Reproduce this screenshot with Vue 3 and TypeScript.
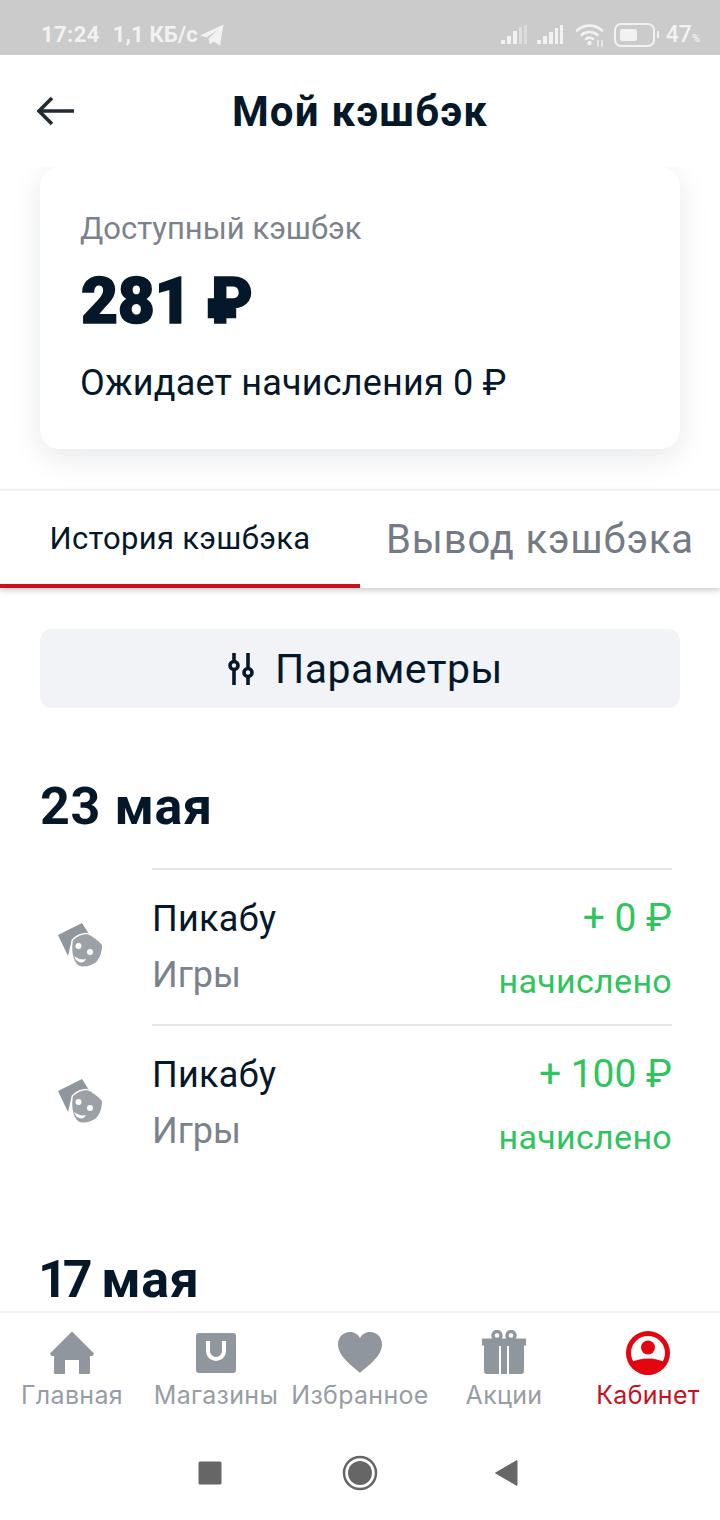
<script setup lang="ts">
interface Tx { name: string; cat: string; amount: string; status: string }
const txs: Tx[] = [
  { name: 'Пикабу', cat: 'Игры', amount: '+ 0 ₽', status: 'начислено' },
  { name: 'Пикабу', cat: 'Игры', amount: '+ 100 ₽', status: 'начислено' },
]
</script>

<template>
  <div class="screen">
    <div class="status">
      <div class="st-left">
        <span class="time">17:24</span>
        <span class="speed">1,1 КБ/с</span>
        <svg class="tg" width="26" height="24" viewBox="0 0 26 24"><path d="M1 12.5 24.5 1.5 21 22.5 14.5 18.5 11 21.5 9.5 15.5 19 6.5 7.5 14.5Z" fill="#f2f2f2"/></svg>
      </div>
      <div class="st-right">
        <svg class="sig1" width="27" height="20" viewBox="0 0 27 20">
          <rect x="0" y="15" width="4" height="4" fill="#f2f2f2"/><rect x="6" y="11" width="4" height="8" fill="#f2f2f2"/><rect x="12" y="6" width="4" height="13" fill="#f2f2f2"/><rect x="18" y="2" width="3" height="17" fill="#dfdfdf"/><rect x="23" y="0" width="3" height="19" fill="#dcdcdc"/>
        </svg>
        <svg class="sig2" width="27" height="20" viewBox="0 0 27 20">
          <rect x="0" y="15" width="4" height="4" fill="#f2f2f2"/><rect x="6" y="11" width="4" height="8" fill="#f2f2f2"/><rect x="12" y="7" width="4" height="12" fill="#f2f2f2"/><rect x="18" y="3" width="3" height="16" fill="#f2f2f2"/><rect x="23" y="0" width="3" height="19" fill="#f2f2f2"/>
        </svg>
        <svg class="wifi" width="30" height="24" viewBox="0 0 30 24" fill="none" stroke="#f2f2f2" stroke-width="2.6" stroke-linecap="round">
          <path d="M2 7.5C9 1 20 1 27 7.5"/><path d="M6.5 12C11 8 18 8 22.5 12"/><path d="M11 16C13 14.5 16 14.5 18 16"/>
          <circle cx="14.5" cy="20" r="2.2" fill="#f2f2f2" stroke="none"/>
          <path d="M23 17.5V23M27 17.5V23" stroke-width="1.4"/>
        </svg>
        <div class="battery"><div class="bat-fill"></div></div>
        <div class="bat-tip"></div>
        <span class="pct">47<small>%</small></span>
      </div>
    </div>

    <header class="top">
      <svg class="back" width="40" height="30" viewBox="0 0 40 30" fill="none" stroke="#222a30" stroke-width="3.6">
        <path d="M38 15H3"/><path d="M16 2 3 15 16 28"/>
      </svg>
      <h1>Мой кэшбэк</h1>
    </header>

    <main class="content">
      <section class="card">
        <div class="avail">Доступный кэшбэк</div>
        <div class="sum">281 ₽</div>
        <div class="wait">Ожидает начисления 0 ₽</div>
      </section>

      <nav class="tabs">
        <div class="tab tab-on">История кэшбэка</div>
        <div class="tab tab-off">Вывод кэшбэка</div>
      </nav>

      <div class="filter-wrap">
        <button class="filter" type="button">
          <svg width="28" height="32" viewBox="0 0 28 32" fill="none" stroke="#04182a" stroke-width="3.6">
            <path d="M7 0V8M7 17V32M21 0V15M21 24V32"/>
            <circle cx="7" cy="12.500" r="4"/><circle cx="21" cy="19.500" r="4"/>
          </svg>
          <span>Параметры</span>
        </button>
      </div>

      <h2 class="date d1">23 мая</h2>
      <div class="list">
        <div v-for="(t, i) in txs" :key="i" class="row">
          <div class="mask">
            <svg width="44" height="44" viewBox="0 0 44 44">
              <path d="M0 12 24 0 31 11 14 16 10 33Z" fill="#90969e"/>
              <path d="M15 17C19 13 25 11 29 11 34 13 40 17 44 22 44 30 41 37 37 40 32 43 25 45 20 42 15 38 13 27 15 17Z" fill="#9ca1a8" stroke="#fff" stroke-width="2.400" paint-order="stroke"/>
              <circle cx="20.500" cy="23" r="3" fill="#fff"/><circle cx="32" cy="29" r="3" fill="#fff"/>
              <path d="M16 33C20 36 24 37 28 36 26 41 19 41 16 33Z" fill="#fff"/>
            </svg>
          </div>
          <div class="body">
            <div class="cell-l">
              <div class="name">{{ t.name }}</div>
              <div class="cat">{{ t.cat }}</div>
            </div>
            <div class="cell-r">
              <div class="amount">{{ t.amount }}</div>
              <div class="state">{{ t.status }}</div>
            </div>
          </div>
        </div>
      </div>
      <h2 class="date d2"><span class="num">17</span> мая</h2>
    </main>

    <footer class="bottom">
      <div class="nav">
        <div class="item">
          <svg width="46" height="46" viewBox="0 0 46 46"><path d="M23 1.500 45 23.500 43.500 26H41V42.500Q41 44 39.500 44H30V30H16V44H6.500Q5 44 5 42.500V26H2.500L1 23.500Z" fill="#90969e"/></svg>
          <span>Главная</span>
        </div>
        <div class="item">
          <svg width="46" height="46" viewBox="0 0 46 46"><rect x="3" y="3" width="40" height="40" rx="3" fill="#90969e"/><path d="M15 11V21A8 8 0 0 0 31 21V11" fill="none" stroke="#fff" stroke-width="4"/></svg>
          <span>Магазины</span>
        </div>
        <div class="item">
          <svg width="46" height="46" viewBox="0 0 46 46"><path d="M23 43C17 37 1 27 1 14.500 1 6 7.500 2 13 2 17.500 2 21 4.500 23 8 25 4.500 28.500 2 33 2 38.500 2 45 6 45 14.500 45 27 29 37 23 43Z" fill="#90969e"/></svg>
          <span>Избранное</span>
        </div>
        <div class="item">
          <svg width="46" height="46" viewBox="0 0 46 46">
            <path d="M1 8.500H45V15.500H1ZM3 15.500H43V41Q43 44 40 44H6Q3 44 3 41Z" fill="#90969e"/>
            <circle cx="16" cy="5.500" r="4" fill="none" stroke="#90969e" stroke-width="3.400"/><circle cx="30" cy="5.500" r="4" fill="none" stroke="#90969e" stroke-width="3.400"/>
            <path d="M19 16V44M27 16V44" stroke="#fff" stroke-width="2"/>
          </svg>
          <span>Акции</span>
        </div>
        <div class="item active">
          <svg width="46" height="46" viewBox="0 0 46 46">
            <circle cx="23" cy="23" r="22" fill="#e30611"/>
            <circle cx="23" cy="23" r="17" fill="#fff"/>
            <circle cx="23" cy="17.500" r="7" fill="#e30611"/>
            <path d="M5 33C10 30 16 28.500 23 28.500 30 28.500 36 30 41 33 37 41 30 45 23 45 16 45 9 41 5 33Z" fill="#e30611"/>
          </svg>
          <span>Кабинет</span>
        </div>
      </div>
      <div class="sysbar">
        <svg class="sys-sq" width="24" height="24" viewBox="0 0 24 24"><rect x="0.500" y="0.500" width="23" height="23" rx="1.500" fill="#666"/></svg>
        <svg width="36" height="36" viewBox="0 0 36 36"><circle cx="18" cy="18" r="16" fill="none" stroke="#666" stroke-width="2.500"/><circle cx="18" cy="18" r="12" fill="#666"/></svg>
        <svg class="sys-tri" width="24" height="28" viewBox="0 0 24 28"><path d="M1.500 14 23 1.500V26.500Z" fill="#666" stroke="#666" stroke-linejoin="round"/></svg>
      </div>
    </footer>
  </div>
</template>

<style>
html, body { margin: 0; padding: 0; background: #fff; }
</style>

<style scoped>
* { box-sizing: border-box; }
.screen {
  width: 720px; height: 1520px; display: flex; flex-direction: column; overflow: hidden;
  background: #fff; font-family: Roboto, "Noto Sans", sans-serif; color: #04182a;
}
.status {
  height: 55px; flex: none; background: #cbcbcb; color: #f2f2f2; display: flex;
  justify-content: space-between; align-items: center; padding: 14px 20px 0 41px;
  font-size: 22px; font-weight: 700;
}
.st-left { display: flex; align-items: center; }
.time { letter-spacing: 0.400px; }
.speed { margin-left: 13px; letter-spacing: 0.200px; }
.tg { margin-left: 1px; }
.st-right { display: flex; align-items: center; }
.sig2 { margin-left: 9px; }
.wifi { margin-left: 11px; }
.battery { width: 41px; height: 24px; border: 2.500px solid #f2f2f2; border-radius: 7px; padding: 4px; margin-left: 9px; }
.bat-fill { width: 17px; height: 100%; background: #f2f2f2; border-radius: 2px; }
.bat-tip { width: 2px; height: 7px; background: #f2f2f2; margin-left: 2px; }
.pct { font-size: 23px; font-weight: 500; margin-left: 7px; }
.pct small { font-size: 11px; }
.top { height: 112px; flex: none; display: flex; align-items: center; justify-content: center; position: relative; }
.back { position: absolute; left: 36px; top: 41px; }
h1 { margin: 2px 0 0; font-size: 42px; font-weight: 700; line-height: 48px; letter-spacing: 1.200px; }
.content { flex: 1; min-height: 0; overflow: hidden; display: flex; flex-direction: column; }
.card {
  margin: 0 40px; height: 282px; flex: none; background: #fff; border-radius: 20px;
  box-shadow: 0 8px 30px rgba(20, 30, 50, 0.100); padding: 42px 40px 0;
}
.avail { font-size: 31px; line-height: 40px; color: #7b828c; }
.sum { font-size: 64px; line-height: 72px; font-weight: 900; margin-top: 17px; margin-left: 1px; letter-spacing: -0.400px; -webkit-text-stroke: 1.500px #04182a; }
.wait { font-size: 36px; line-height: 44px; margin-top: 23px; letter-spacing: 0.200px; }
.tabs {
  margin-top: 40px; height: 99px; flex: none; display: flex; background: #fff;
  border-top: 2px solid #eff0f2; box-shadow: 0 3px 5px rgba(30, 35, 50, 0.200); position: relative;
}
.tab { width: 360px; display: flex; align-items: center; justify-content: center; }
.tab-on { font-size: 31px; border-bottom: 4px solid #c9101e; letter-spacing: 0.300px; padding-top: 1px; }
.tab-off { font-size: 40px; color: #747b85; letter-spacing: 0.850px; white-space: nowrap; }
.filter-wrap { padding: 41px 40px 0; flex: none; }
.filter {
  width: 100%; height: 79px; border: 0; background: #f1f3f7; border-radius: 12px; display: flex;
  align-items: center; justify-content: center; gap: 20px; font-family: inherit; color: #04182a;
  font-size: 41px; letter-spacing: 0.500px; padding: 0 0 0 10px;
}
.date { margin: 0; font-size: 52px; line-height: 56px; font-weight: 700; padding-left: 40px; flex: none; letter-spacing: 0.600px; }
.d1 { margin-top: 71px; }
.d2 { margin-top: 72px; }
.num { letter-spacing: -5px; margin-left: -2px; }
.list { margin-top: 33px; flex: none; }
.row { display: flex; height: 156px; }
.mask { width: 152px; flex: none; display: flex; justify-content: center; align-items: center; padding: 0 0 2px 8px; }
.body {
  width: 520px; flex: none; display: flex; justify-content: space-between;
  border-top: 2px solid #e3e5ea; padding-top: 25px;
}
.name { font-size: 36px; line-height: 48px; letter-spacing: 0.300px; }
.cat { font-size: 36px; line-height: 48px; color: #7b828c; margin-top: 8px; }
.cell-r { text-align: right; color: #2fc45d; margin-top: -1px; }
.amount { font-size: 39px; line-height: 48px; }
.state { font-size: 34px; line-height: 48px; margin-top: 15px; letter-spacing: 0.300px; }
.bottom { height: 209px; flex: none; background: #fff; border-top: 2px solid #f3f4f5; }
.nav { display: flex; justify-content: space-between; padding: 17px 0 0; height: 116px; }
.item { width: 144px; display: flex; flex-direction: column; align-items: center; color: #979da5; font-size: 25px; font-family: Inter, Roboto, sans-serif; white-space: nowrap; letter-spacing: 0.300px; }
.item span { line-height: 30px; margin-top: 4px; }
.active { color: #c9101e; }
.sysbar { height: 91px; display: flex; align-items: center; justify-content: center; gap: 120px; padding: 0 4px 4px 0; }
.sys-tri { margin-left: -4px; }
</style>
